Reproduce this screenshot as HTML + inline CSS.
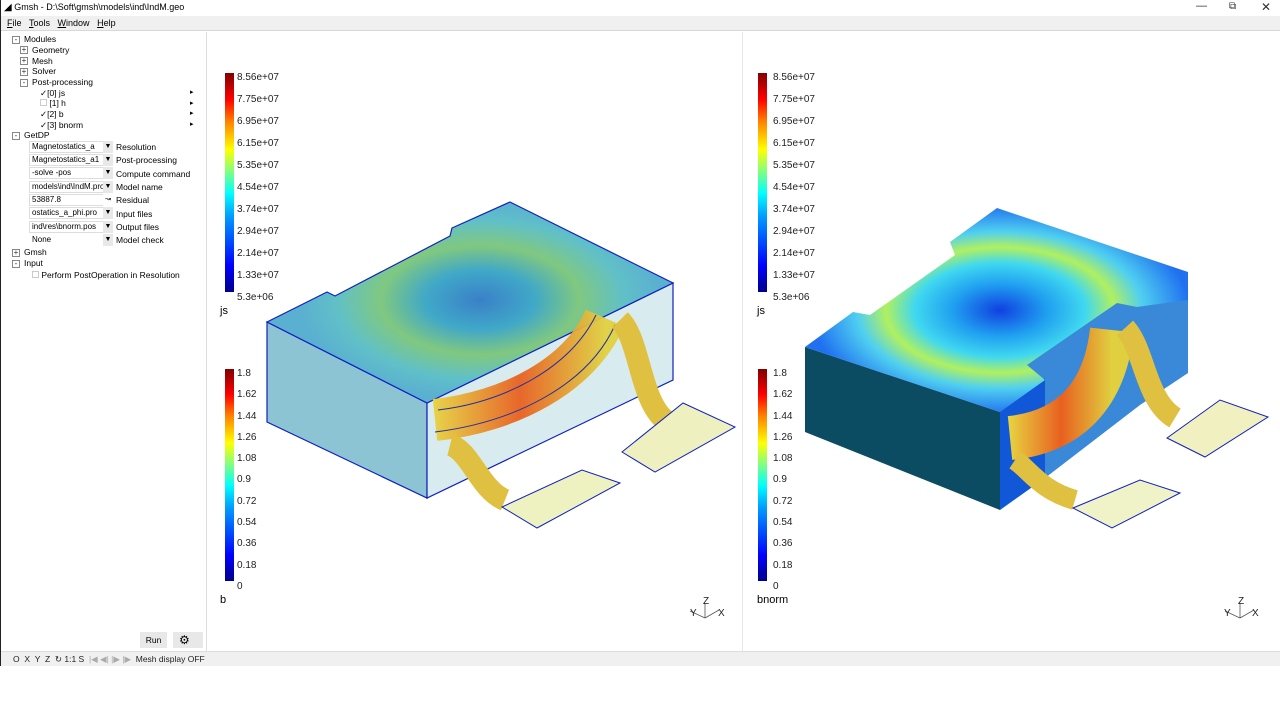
<!DOCTYPE html>
<html><head><meta charset="utf-8"><style>
*{margin:0;padding:0;box-sizing:border-box}
body{width:1280px;height:720px;background:#fff;font-family:"Liberation Sans",sans-serif;position:relative;overflow:hidden;color:#000}
.a{position:absolute;white-space:nowrap}
.t{font-size:8.5px}
.pm{position:absolute;width:8px;height:8px;border:1px solid #888;background:#fff;font-size:8px;line-height:6px;text-align:center;color:#333}
.dd{position:absolute;height:12px;border:1px solid #ddd;background:#fff;font-size:8px;line-height:10px;padding-left:2px;overflow:hidden}
.ar{position:absolute;width:10px;height:12px;background:#e8e8e8;font-size:7px;line-height:12px;text-align:center}
.cl{font-size:10px;position:absolute;color:#222}
</style></head><body>
<div class="a" style="left:0;top:0;width:1px;height:666px;background:#222"></div>
<div class="a" style="left:4px;top:2px;font-size:9px"><span style="font-size:10px">&#9698;</span> Gmsh - D:\Soft\gmsh\models\ind\IndM.geo</div>
<div class="a" style="left:1196px;top:0;font-size:11px;color:#333">&#8212;</div>
<div class="a" style="left:1229px;top:1px;font-size:10px;color:#333">&#10697;</div>
<div class="a" style="left:1261px;top:0;font-size:12px;color:#333">&#10005;</div>
<div class="a" style="left:1px;top:16px;width:1279px;height:15px;background:#f0f0f0;border-bottom:1px solid #d8d8d8"></div>
<div class="a" style="left:7px;top:18px;font-size:9px"><u>F</u>ile &nbsp;&nbsp;<u>T</u>ools &nbsp;&nbsp;<u>W</u>indow &nbsp;&nbsp;<u>H</u>elp</div>

<div class="a" style="left:206px;top:32px;width:1px;height:619px;background:#ddd"></div>
<div class="pm" style="left:12px;top:36px">-</div><div class="a t" style="left:24px;top:34px">Modules</div>
<div class="pm" style="left:20px;top:46px">+</div><div class="a t" style="left:32px;top:45px">Geometry</div>
<div class="pm" style="left:20px;top:57px">+</div><div class="a t" style="left:32px;top:56px">Mesh</div>
<div class="pm" style="left:20px;top:68px">+</div><div class="a t" style="left:32px;top:66px">Solver</div>
<div class="pm" style="left:20px;top:79px">-</div><div class="a t" style="left:32px;top:77px">Post-processing</div>
<div class="a t" style="left:40px;top:88px">&#10003;[0] js</div>
<div class="a t" style="left:40px;top:98px"><span style="display:inline-block;width:7px;height:7px;border:1px solid #ccc"></span> [1] h</div>
<div class="a t" style="left:40px;top:109px">&#10003;[2] b</div>
<div class="a t" style="left:40px;top:120px">&#10003;[3] bnorm</div>
<div class="a" style="left:190px;top:88px;font-size:7px;line-height:10.7px">&#9656;<br>&#9656;<br>&#9656;<br>&#9656;</div>
<div class="pm" style="left:12px;top:132px">-</div><div class="a t" style="left:24px;top:130px">GetDP</div>

<div class="dd" style="left:29px;top:141px;width:76px">Magnetostatics_a</div><div class="ar" style="left:103px;top:141px">&#9660;</div><div class="a t" style="left:116px;top:142px">Resolution</div>
<div class="dd" style="left:29px;top:154px;width:76px">Magnetostatics_a1</div><div class="ar" style="left:103px;top:154px">&#9660;</div><div class="a t" style="left:116px;top:155px">Post-processing</div>
<div class="dd" style="left:29px;top:167px;width:76px">-solve -pos</div><div class="ar" style="left:103px;top:167px">&#9660;</div><div class="a t" style="left:116px;top:169px">Compute command</div>
<div class="dd" style="left:29px;top:181px;width:76px">models\ind\IndM.pro</div><div class="ar" style="left:103px;top:181px">&#9660;</div><div class="a t" style="left:116px;top:182px">Model name</div>
<div class="dd" style="left:29px;top:194px;width:76px">53887.8</div><div class="ar" style="left:103px;top:194px;background:#fff">&#8605;</div><div class="a t" style="left:116px;top:195px">Residual</div>
<div class="dd" style="left:29px;top:207px;width:76px">ostatics_a_phi.pro</div><div class="ar" style="left:103px;top:207px">&#9660;</div><div class="a t" style="left:116px;top:209px">Input files</div>
<div class="dd" style="left:29px;top:221px;width:76px">ind\res\bnorm.pos</div><div class="ar" style="left:103px;top:221px">&#9660;</div><div class="a t" style="left:116px;top:222px">Output files</div>
<div class="dd" style="left:29px;top:234px;width:76px;border-color:#fff">None</div><div class="ar" style="left:103px;top:234px">&#9660;</div><div class="a t" style="left:116px;top:235px">Model check</div>
<div class="pm" style="left:12px;top:249px">+</div><div class="a t" style="left:24px;top:247px">Gmsh</div>
<div class="pm" style="left:12px;top:260px">-</div><div class="a t" style="left:24px;top:258px">Input</div>
<div class="a t" style="left:32px;top:270px"><span style="display:inline-block;width:7px;height:7px;border:1px solid #ccc"></span> Perform PostOperation in Resolution</div>

<div class="a" style="left:140px;top:632px;width:27px;height:16px;background:#e8e8e8;font-size:8.5px;text-align:center;line-height:16px">Run</div>
<div class="a" style="left:173px;top:632px;width:30px;height:16px;background:#e8e8e8;font-size:12px;line-height:16px;padding-left:6px">&#9881;</div>

<div class="a" style="left:1px;top:651px;width:1279px;height:15px;background:#f0f0f0;border-top:1px solid #ddd"></div>
<div class="a" style="left:13px;top:654px;font-size:8.5px;color:#222">O &nbsp;X &nbsp;Y &nbsp;Z &nbsp;&#8635; 1:1 S &nbsp;<span style="color:#aaa">|&#9664; &#9664;| |&#9654; |&#9654;</span>&nbsp; Mesh display OFF</div>

<div class="a" style="left:742px;top:32px;width:1px;height:619px;background:#e6e6e6"></div>

<div class="a" style="left:225px;top:73px;width:9px;height:219px;background:linear-gradient(to top,#00008a,#0000ff 12%,#00a0ff 35%,#00ffff 45%,#80ff80 55%,#ffff00 65%,#ff8000 78%,#ff0000 88%,#800000)"></div>
<div class="a" style="left:225px;top:369px;width:9px;height:212px;background:linear-gradient(to top,#00008a,#0000ff 12%,#00a0ff 35%,#00ffff 45%,#80ff80 55%,#ffff00 65%,#ff8000 78%,#ff0000 88%,#800000)"></div>
<div class="a" style="left:758px;top:73px;width:9px;height:219px;background:linear-gradient(to top,#00008a,#0000ff 12%,#00a0ff 35%,#00ffff 45%,#80ff80 55%,#ffff00 65%,#ff8000 78%,#ff0000 88%,#800000)"></div>
<div class="a" style="left:758px;top:369px;width:9px;height:212px;background:linear-gradient(to top,#00008a,#0000ff 12%,#00a0ff 35%,#00ffff 45%,#80ff80 55%,#ffff00 65%,#ff8000 78%,#ff0000 88%,#800000)"></div>

<div class="cl" style="left:237px;top:67px;line-height:22px">8.56e+07<br>7.75e+07<br>6.95e+07<br>6.15e+07<br>5.35e+07<br>4.54e+07<br>3.74e+07<br>2.94e+07<br>2.14e+07<br>1.33e+07<br>5.3e+06</div>
<div class="cl" style="left:773px;top:67px;line-height:22px">8.56e+07<br>7.75e+07<br>6.95e+07<br>6.15e+07<br>5.35e+07<br>4.54e+07<br>3.74e+07<br>2.94e+07<br>2.14e+07<br>1.33e+07<br>5.3e+06</div>
<div class="cl" style="left:237px;top:363px;line-height:21.3px">1.8<br>1.62<br>1.44<br>1.26<br>1.08<br>0.9<br>0.72<br>0.54<br>0.36<br>0.18<br>0</div>
<div class="cl" style="left:773px;top:363px;line-height:21.3px">1.8<br>1.62<br>1.44<br>1.26<br>1.08<br>0.9<br>0.72<br>0.54<br>0.36<br>0.18<br>0</div>
<div class="a" style="left:220px;top:305px;font-size:11px">js</div>
<div class="a" style="left:220px;top:594px;font-size:11px">b</div>
<div class="a" style="left:757px;top:305px;font-size:11px">js</div>
<div class="a" style="left:757px;top:594px;font-size:11px">bnorm</div>

<svg class="a" style="left:0;top:0" width="1280" height="720">
<defs>
<radialGradient id="rt" cx="1000" cy="310" r="190" gradientUnits="userSpaceOnUse" gradientTransform="translate(1000 310) scale(1 .55) rotate(-20) translate(-1000 -310)">
<stop offset="0" stop-color="#1040e0"/><stop offset=".25" stop-color="#20a0f0"/><stop offset=".45" stop-color="#40d8f0"/><stop offset=".6" stop-color="#b0f060"/><stop offset=".75" stop-color="#50d0f0"/><stop offset="1" stop-color="#2070f0"/></radialGradient>
<radialGradient id="lt" cx="480" cy="300" r="180" gradientUnits="userSpaceOnUse" gradientTransform="translate(480 300) scale(1 .55) rotate(-25) translate(-480 -300)">
<stop offset="0" stop-color="#3a80c8"/><stop offset=".3" stop-color="#40a8c8"/><stop offset=".55" stop-color="#80c880"/><stop offset=".8" stop-color="#60c0c8"/><stop offset="1" stop-color="#5ab0d0"/></radialGradient>
<linearGradient id="coil" x1="0" y1="0" x2="1" y2="0"><stop offset="0" stop-color="#e8d040"/><stop offset=".5" stop-color="#e86020"/><stop offset="1" stop-color="#e0d040"/></linearGradient>
</defs>
<polygon points="267,322 427,403 427,498 267,422" fill="#8cc4d4" stroke="#1020c0" stroke-width="1.2"/>
<polygon points="427,403 673,283 673,380 427,498" fill="#d8ecf0" stroke="#1020c0" stroke-width="1.2"/>
<polygon points="267,322 327,292 335,296 450,236 452,228 510,202 673,283 427,403" fill="url(#lt)" stroke="#1020c0" stroke-width="1.2"/>
<path d="M435,420 C510,412 580,375 605,318" stroke="url(#coil)" stroke-width="42" fill="none" opacity=".95"/>
<path d="M435,432 C515,422 588,385 615,325" stroke="#2030a0" stroke-width="1" fill="none"/>
<path d="M438,410 C505,402 570,368 596,315" stroke="#2030a0" stroke-width="1" fill="none"/>
<path d="M620,320 C640,340 640,400 665,420" stroke="#e0c040" stroke-width="22" fill="none"/>
<path d="M450,445 C470,450 480,490 505,500" stroke="#e0c040" stroke-width="22" fill="none"/>
<polygon points="502,507 582,470 620,483 537,528" fill="#eef2c0" stroke="#1020c0"/>
<polygon points="622,452 683,403 735,427 655,472" fill="#eef0c0" stroke="#1020c0"/>
<!-- right object -->
<polygon points="1000,412 1020,360 1117,295 1188,295 1188,373 1140,405 1045,478" fill="#3a88d8"/>
<polygon points="805,347 1000,412 1000,510 805,432" fill="#0c4c62"/>
<polygon points="1000,412 1045,378 1045,478 1000,510" fill="#1058d8"/>
<path d="M1010,438 C1070,432 1105,395 1112,330" stroke="url(#coil)" stroke-width="44" fill="none"/>
<path d="M1125,328 C1145,350 1145,400 1175,418" stroke="#e0c040" stroke-width="22" fill="none"/>
<path d="M1015,460 C1030,470 1040,490 1075,500" stroke="#e0c040" stroke-width="20" fill="none"/>
<polygon points="1073,508 1140,480 1180,493 1112,528" fill="#f0f2c8" stroke="#1020c0"/>
<polygon points="1167,438 1220,400 1268,417 1205,457" fill="#f0f0c0" stroke="#1020c0"/>
<polygon points="805,347 853,312 870,315 955,255 950,242 997,208 1188,272 1188,300 1137,307 1117,303 1027,365 1045,380 1000,412" fill="url(#rt)"/>
<g stroke="#555" fill="none" stroke-width=".8"><path d="M705,618 V603 M705,618 L690,611 M705,618 L719,610"/><path d="M1240,618 V603 M1240,618 L1225,611 M1240,618 L1254,610"/></g>
<g font-family="Liberation Sans" font-size="10" fill="#222"><text x="703" y="604">Z</text><text x="690" y="616">Y</text><text x="718" y="616">X</text><text x="1238" y="604">Z</text><text x="1224" y="616">Y</text><text x="1252" y="616">X</text></g>
</svg>
</body></html>
